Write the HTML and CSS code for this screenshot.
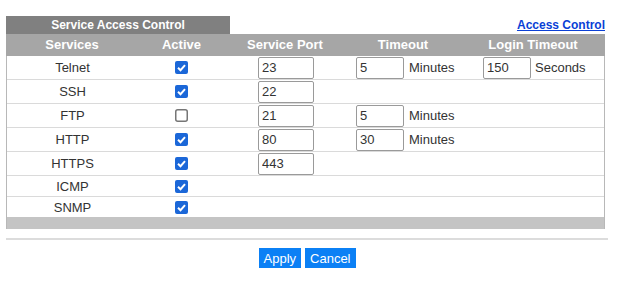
FILE: index.html
```html
<!DOCTYPE html>
<html lang="en">
<head>
    <meta charset="UTF-8">
    <meta name="viewport" content="width=device-width, initial-scale=1.0">
    <title>Service Access Control</title>
    <link rel="stylesheet" href="styles.css">
</head>
<body>
    <div id="panel">
        <div class="panel-top">
            <div class="tab">Service Access Control</div>
            <a class="link" href="#">Access Control</a>
        </div>
        <div class="head">
            <div>Services</div>
            <div>Active</div>
            <div>Service Port</div>
            <div>Timeout</div>
            <div>Login Timeout</div>
        </div>
        <div class="rows">
            <div class="row tall">
                <div class="name">Telnet</div>
                <div class="act"><svg class="cb" width="13" height="13" viewBox="0 0 13 13"><rect width="13" height="13" rx="2" fill="#1b67d8"/><polyline points="3,6.8 5.5,9.2 10,4.2" fill="none" stroke="#fff" stroke-width="2"/></svg></div>
                <div class="port"><input type="text" value="23"></div>
                <div class="tmo"><input type="text" value="5"><span>Minutes</span></div>
                <div class="login"><input type="text" value="150"><span>Seconds</span></div>
            </div>
            <div class="row tall">
                <div class="name">SSH</div>
                <div class="act"><svg class="cb" width="13" height="13" viewBox="0 0 13 13"><rect width="13" height="13" rx="2" fill="#1b67d8"/><polyline points="3,6.8 5.5,9.2 10,4.2" fill="none" stroke="#fff" stroke-width="2"/></svg></div>
                <div class="port"><input type="text" value="22"></div>
                <div class="tmo"></div>
                <div class="login"></div>
            </div>
            <div class="row tall">
                <div class="name">FTP</div>
                <div class="act"><svg class="cb" width="13" height="13" viewBox="0 0 13 13"><rect x="0.75" y="0.75" width="11.5" height="11.5" rx="2" fill="#fff" stroke="#767676" stroke-width="1.5"/></svg></div>
                <div class="port"><input type="text" value="21"></div>
                <div class="tmo"><input type="text" value="5"><span>Minutes</span></div>
                <div class="login"></div>
            </div>
            <div class="row tall">
                <div class="name">HTTP</div>
                <div class="act"><svg class="cb" width="13" height="13" viewBox="0 0 13 13"><rect width="13" height="13" rx="2" fill="#1b67d8"/><polyline points="3,6.8 5.5,9.2 10,4.2" fill="none" stroke="#fff" stroke-width="2"/></svg></div>
                <div class="port"><input type="text" value="80"></div>
                <div class="tmo"><input type="text" value="30"><span>Minutes</span></div>
                <div class="login"></div>
            </div>
            <div class="row tall">
                <div class="name">HTTPS</div>
                <div class="act"><svg class="cb" width="13" height="13" viewBox="0 0 13 13"><rect width="13" height="13" rx="2" fill="#1b67d8"/><polyline points="3,6.8 5.5,9.2 10,4.2" fill="none" stroke="#fff" stroke-width="2"/></svg></div>
                <div class="port"><input type="text" value="443"></div>
                <div class="tmo"></div>
                <div class="login"></div>
            </div>
            <div class="row">
                <div class="name">ICMP</div>
                <div class="act"><svg class="cb" width="13" height="13" viewBox="0 0 13 13"><rect width="13" height="13" rx="2" fill="#1b67d8"/><polyline points="3,6.8 5.5,9.2 10,4.2" fill="none" stroke="#fff" stroke-width="2"/></svg></div>
                <div class="port"></div>
                <div class="tmo"></div>
                <div class="login"></div>
            </div>
            <div class="row last">
                <div class="name">SNMP</div>
                <div class="act"><svg class="cb" width="13" height="13" viewBox="0 0 13 13"><rect width="13" height="13" rx="2" fill="#1b67d8"/><polyline points="3,6.8 5.5,9.2 10,4.2" fill="none" stroke="#fff" stroke-width="2"/></svg></div>
                <div class="port"></div>
                <div class="tmo"></div>
                <div class="login"></div>
            </div>
            <div class="foot"></div>
        </div>
        <div class="rule"></div>
        <div class="actions">
            <button type="button">Apply</button>
            <button type="button">Cancel</button>
        </div>
    </div>
</body>
</html>
```

FILE: styles.css
```css
body {
    margin: 0;
    font-family: "Liberation Sans", Arial, sans-serif;
    font-size: 13px;
    color: #333;
    background: #fff;
}
#panel {
    width: 599px;
    padding: 16px 0 0 6px;
}
.panel-top {
    display: flex;
    justify-content: space-between;
    align-items: flex-end;
    height: 18px;
}
.tab {
    width: 224px;
    height: 18px;
    line-height: 18px;
    background-color: #808080;
    color: #fff;
    font-weight: bold;
    font-size: 12px;
    text-align: center;
}
.link {
    color: #0a3fd6;
    font-weight: bold;
    font-size: 12px;
    line-height: 14px;
    margin-bottom: 2px;
}
.head {
    display: grid;
    grid-template-columns: 132px 87px 120px 116px 1fr;
    height: 22px;
    line-height: 22px;
    background-color: #a6a6a6;
    color: #fff;
    font-weight: bold;
    text-align: center;
}
.rows {
    border-left: 1px solid #b8b8b8;
    border-right: 1px solid #b8b8b8;
}
.row {
    display: grid;
    grid-template-columns: 131px 87px 120px 116px 1fr;
    height: 20px;
    border-bottom: 1px solid #dadada;
    align-items: center;
}
.row.tall {
    height: 23px;
}
.row.last {
    border-bottom: none;
}
.name {
    text-align: center;
}
.act {
    display: flex;
    justify-content: center;
}
.cb {
    display: block;
}
.port, .tmo, .login {
    display: flex;
    align-items: center;
}
.port {
    padding-left: 33px;
}
.tmo {
    padding-left: 11px;
}
.login {
    padding-left: 22px;
}
input {
    box-sizing: border-box;
    width: 48px;
    height: 22px;
    padding: 0 3px;
    border: 1px solid #9a9a9a;
    border-radius: 2px;
    font-family: "Liberation Sans", Arial, sans-serif;
    font-size: 13px;
    color: #333;
}
.port input {
    width: 56px;
}
.tmo span {
    margin-left: 5px;
}
.login span {
    margin-left: 4px;
}
.foot {
    height: 12px;
    background-color: #c4c4c4;
}
.rule {
    height: 2px;
    margin-top: 9px;
    width: 602px;
    background-color: #dcdcdc;
}
.actions {
    display: flex;
    justify-content: center;
    gap: 4px;
    margin-top: 8px;
    padding-left: 3px;
}
button {
    height: 20px;
    padding: 0 5px;
    border: none;
    background-color: #0b80f5;
    color: #fff;
    font-family: "Liberation Sans", Arial, sans-serif;
    font-size: 13px;
}
```
